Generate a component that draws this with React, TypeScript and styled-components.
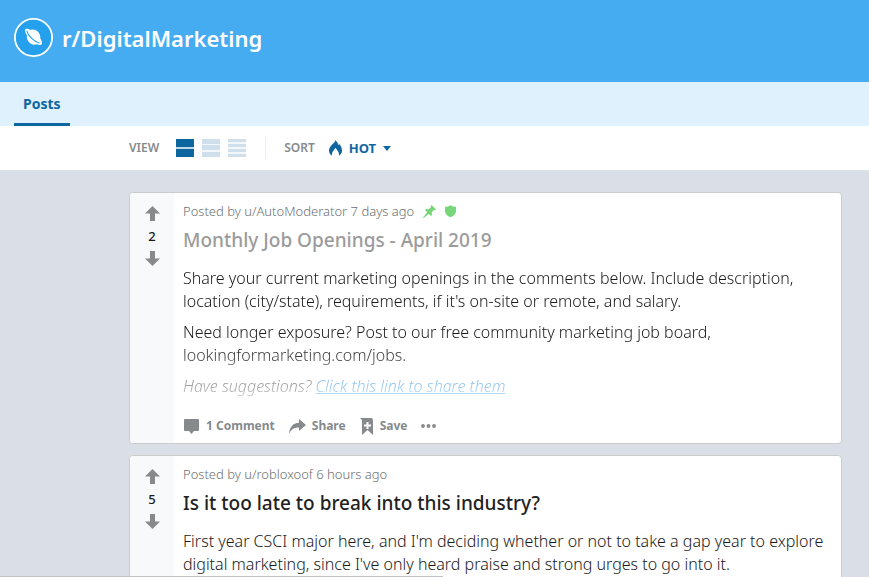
import React from "react";
import styled, { createGlobalStyle, css } from "styled-components";

const ui = '"Noto Sans", "Open Sans", sans-serif';
const blue = "#0e66a1";
const muted = "#878a8c";

const Global = createGlobalStyle`
  * { box-sizing: border-box; }
  html { scrollbar-width: none; }
  body { margin: 0; background: #dadfe7; font-family: ${ui}; color: #222; }
  button { font: inherit; color: inherit; background: none; border: 0; padding: 0; cursor: pointer; }
  svg { display: block; flex: none; }
`;

const Banner = styled.header`
  display: flex;
  align-items: center;
  gap: 9px;
  height: 82px;
  padding: 0 14px 8px;
  background: #45acf2;
  color: #fff;
`;
const CommunityName = styled.h1`
  margin: 0;
  padding-top: 2px;
  font: 600 22px/32px ${ui};
`;
const Tabs = styled.nav`
  display: flex;
  height: 44px;
  padding: 0 14px;
  background: #dff1fd;
`;
const Tab = styled.a`
  padding: 0 9px;
  border-bottom: 3px solid ${blue};
  color: ${blue};
  font: 700 14px/44px ${ui};
  text-decoration: none;
`;
const Toolbar = styled.div`
  display: flex;
  align-items: center;
  height: 44px;
  padding: 0 27px 0 129px;
  background: #fff;
`;
const Label = styled.span`
  color: ${muted};
  font: 600 12px/16px ${ui};
`;
const Views = styled.div`
  display: flex;
  gap: 8px;
  margin: 0 19px 0 17px;
`;
const ViewButton = styled.button<{ $on?: boolean }>`
  color: ${(p) => (p.$on ? blue : "#cfdfeb")};
`;
const Divider = styled.span`
  height: 22px;
  margin-right: 18px;
  border-left: 1px solid #edeff1;
`;
const SortButton = styled.button`
  display: flex;
  align-items: center;
  gap: 7px;
  margin-left: 14px;
  && { color: ${blue}; font: 700 13px/16px ${ui}; }
`;
const Feed = styled.main`
  display: grid;
  gap: 11px;
  padding: 22px 27px 0 129px;
`;
const Card = styled.article`
  display: flex;
  overflow: hidden;
  border: 1px solid #ccc;
  border-radius: 4px;
  background: #fff;
`;
const Votes = styled.div`
  display: flex;
  flex: none;
  flex-direction: column;
  align-items: center;
  gap: 5px;
  width: 44px;
  padding-top: 13px;
  background: #f8f9fb;
  color: ${muted};
`;
const Score = styled.span`
  color: #1a1a1b;
  font: 500 13px/20px ${ui};
`;
const Content = styled.div`
  flex: 1;
  min-width: 0;
  padding: 8px 9px 5px;
`;
const Meta = styled.div`
  display: flex;
  align-items: center;
  gap: 9px;
  height: 20px;
  color: #6c7072;
  font: 300 13px/20px ${ui};
`;
const Title = styled.h2<{ $read?: boolean }>`
  margin: 6px 0 14px;
  color: ${(p) => (p.$read ? "#9b9b9b" : "#222")};
  font: 500 19px/26px ${ui};
`;
const Body = styled.div<{ $faded?: boolean }>`
  color: #1a1a1b;
  font: 300 16px/23px ${ui};
  ${(p) => p.$faded && css`mask-image: linear-gradient(180deg, #000 60%, transparent 112%);`}
  p { margin: 0 0 8px; }
  a { color: #0079d3; }
`;
const Actions = styled.div`
  display: flex;
  align-items: center;
  gap: 14px;
  height: 24px;
  margin-top: 16px;
  color: ${muted};
`;
const Action = styled.button`
  display: flex;
  align-items: center;
  gap: 6px;
  && { font: 700 12px/24px ${ui}; }
`;
const StatusEdge = styled.div`
  position: fixed;
  bottom: 0;
  left: 0;
  width: 51%;
  height: 1px;
  background: #c0c2c7;
`;

const Logo = () => (
  <svg width="39" height="39" viewBox="0 0 39 39" aria-hidden="true">
    <circle cx="19.500" cy="19.500" r="18.600" fill="#24a0ed" stroke="#fff" strokeWidth="1.800" />
    <path d="M11.300 11.200c.8-.9 2.900-.4 5.200.7 5.400-1.800 10.500 3.200 9.800 8.600 1.700 2.500 2.200 5.100 1.200 6.100-.8.800-2.500.6-4.600-.3-5.300 1.900-10.900-2.900-10-9-1.600-2.500-2.500-5-1.600-6.100z" fill="#fff" />
    <path d="M12.700 12.700c1.100 4.800 7.300 11 12.800 12.300" fill="none" stroke="#24a0ed" strokeWidth="1.100" />
  </svg>
);
const Bars = ({ tops, h }: { tops: number[]; h: number }) => (
  <svg width="18" height="18" viewBox="0 0 18 18" fill="currentColor" aria-hidden="true">
    <rect width="18" height="18" opacity=".25" />
    {tops.map((y) => <rect key={y} y={y} width="18" height={h} />)}
  </svg>
);
const Arrow = ({ down }: { down?: boolean }) => (
  <svg width="15" height="15" viewBox="0 0 15 15" fill="currentColor" aria-hidden="true">
    <path d={down ? "M7.500 15 0 7.500h5V0h5v7.500h5z" : "M7.500 0 0 7.500h5V15h5V7.500h5z"} />
  </svg>
);

const VoteColumn = ({ score }: { score: number }) => (
  <Votes>
    <button aria-label="Upvote"><Arrow /></button>
    <Score>{score}</Score>
    <button aria-label="Downvote"><Arrow down /></button>
  </Votes>
);

export default function App() {
  return (
    <>
      <Global />
      <Banner><Logo /><CommunityName>r/DigitalMarketing</CommunityName></Banner>
      <Tabs><Tab href="#posts">Posts</Tab></Tabs>
      <Toolbar>
        <Label>VIEW</Label>
        <Views>
          <ViewButton $on aria-label="Card view"><Bars tops={[0, 10]} h={8} /></ViewButton>
          <ViewButton aria-label="Classic view"><Bars tops={[0, 6, 13]} h={5} /></ViewButton>
          <ViewButton aria-label="Compact view"><Bars tops={[0, 5, 10, 15]} h={3} /></ViewButton>
        </Views>
        <Divider />
        <Label>SORT</Label>
        <SortButton>
          <svg width="13" height="16" viewBox="0 0 13 16" fill="currentColor" aria-hidden="true">
            <path d="M6.500 0C6.500 3 0 5.500 0 10.500 0 12.800 1.200 14.700 3 15.700 2.500 12 5 10.500 6.500 7.800 8 10.500 10.500 12 10 15.700c1.800-1 3-2.900 3-5.200C13 7.500 11.500 5.300 10.300 4L9.500 5.300C9 3 7.500 1.500 6.500 0z" />
          </svg>
          HOT
          <svg width="8" height="5" viewBox="0 0 8 5" fill="currentColor" aria-hidden="true"><path d="M0 0h8L4 5z" /></svg>
        </SortButton>
      </Toolbar>
      <Feed>
        <Card>
          <VoteColumn score={2} />
          <Content>
            <Meta>
              <span>Posted by u/AutoModerator 7 days ago</span>
              <svg width="13" height="13" viewBox="0 0 13 13" fill="#76d679" aria-label="Pinned">
                <path d="M8.500 0 13 4.500l-1 .7-1-.2-2.300 2.300.3 2.400-1.200 1.200-1.900-1.900L.5 13 0 12.500l4.200-5.200L2 5.100l1.200-1.200 2.500.3L8 2l-.2-1.200z" />
              </svg>
              <svg width="11" height="12" viewBox="0 0 11 12" fill="#76d679" aria-label="Moderator">
                <path d="M5.500 0C4 1.500 2 1.800 0 1.800V6c0 3 2.500 5.300 5.500 6C8.500 11.300 11 9 11 6V1.800C9 1.800 7 1.500 5.500 0z" />
              </svg>
            </Meta>
            <Title $read>Monthly Job Openings - April 2019</Title>
            <Body $faded>
              <p>Share your current marketing openings in the comments below. Include description, location (city/state), requirements, if it's on-site or remote, and salary.</p>
              <p>Need longer exposure? Post to our free community marketing job board, lookingformarketing.com/jobs.</p>
              <p><em>Have suggestions? <a href="#share">Click this link to share them</a></em></p>
            </Body>
            <Actions>
              <Action>
                <svg width="17" height="16" viewBox="0 0 17 16" fill="currentColor" aria-hidden="true"><path d="M2 1h13q1 0 1 1v10q0 1-1 1h-4l-2.500 3L6 13H2q-1 0-1-1V2q0-1 1-1z" /></svg>
                1 Comment
              </Action>
              <Action>
                <svg width="17" height="15" viewBox="0 0 17 15" fill="currentColor" aria-hidden="true"><path d="M10 0l7 6-7 6V8.500C5 8.500 2 10.500 0 15 .5 8 4 4 10 3.700z" /></svg>
                Share
              </Action>
              <Action>
                <svg width="14" height="17" viewBox="0 0 14 17" fill="currentColor" aria-hidden="true"><path fillRule="evenodd" d="M0 0h11q2 0 2 2v15l-5.500-5L2 17V2zM6.500 4v2.500H4v2h2.500V11h2V8.500H11v-2H8.500V4z" /></svg>
                Save
              </Action>
              <Action aria-label="More">
                <svg width="15" height="4" viewBox="0 0 15 4" fill="currentColor" aria-hidden="true"><circle cx="2" cy="2" r="1.900" /><circle cx="7.500" cy="2" r="1.900" /><circle cx="13" cy="2" r="1.900" /></svg>
              </Action>
            </Actions>
          </Content>
        </Card>
        <Card>
          <VoteColumn score={5} />
          <Content>
            <Meta><span>Posted by u/robloxoof 6 hours ago</span></Meta>
            <Title>Is it too late to break into this industry?</Title>
            <Body>
              <p>First year CSCI major here, and I'm deciding whether or not to take a gap year to explore digital marketing, since I've only heard praise and strong urges to go into it.</p>
            </Body>
          </Content>
        </Card>
      </Feed>
      <StatusEdge />
    </>
  );
}
